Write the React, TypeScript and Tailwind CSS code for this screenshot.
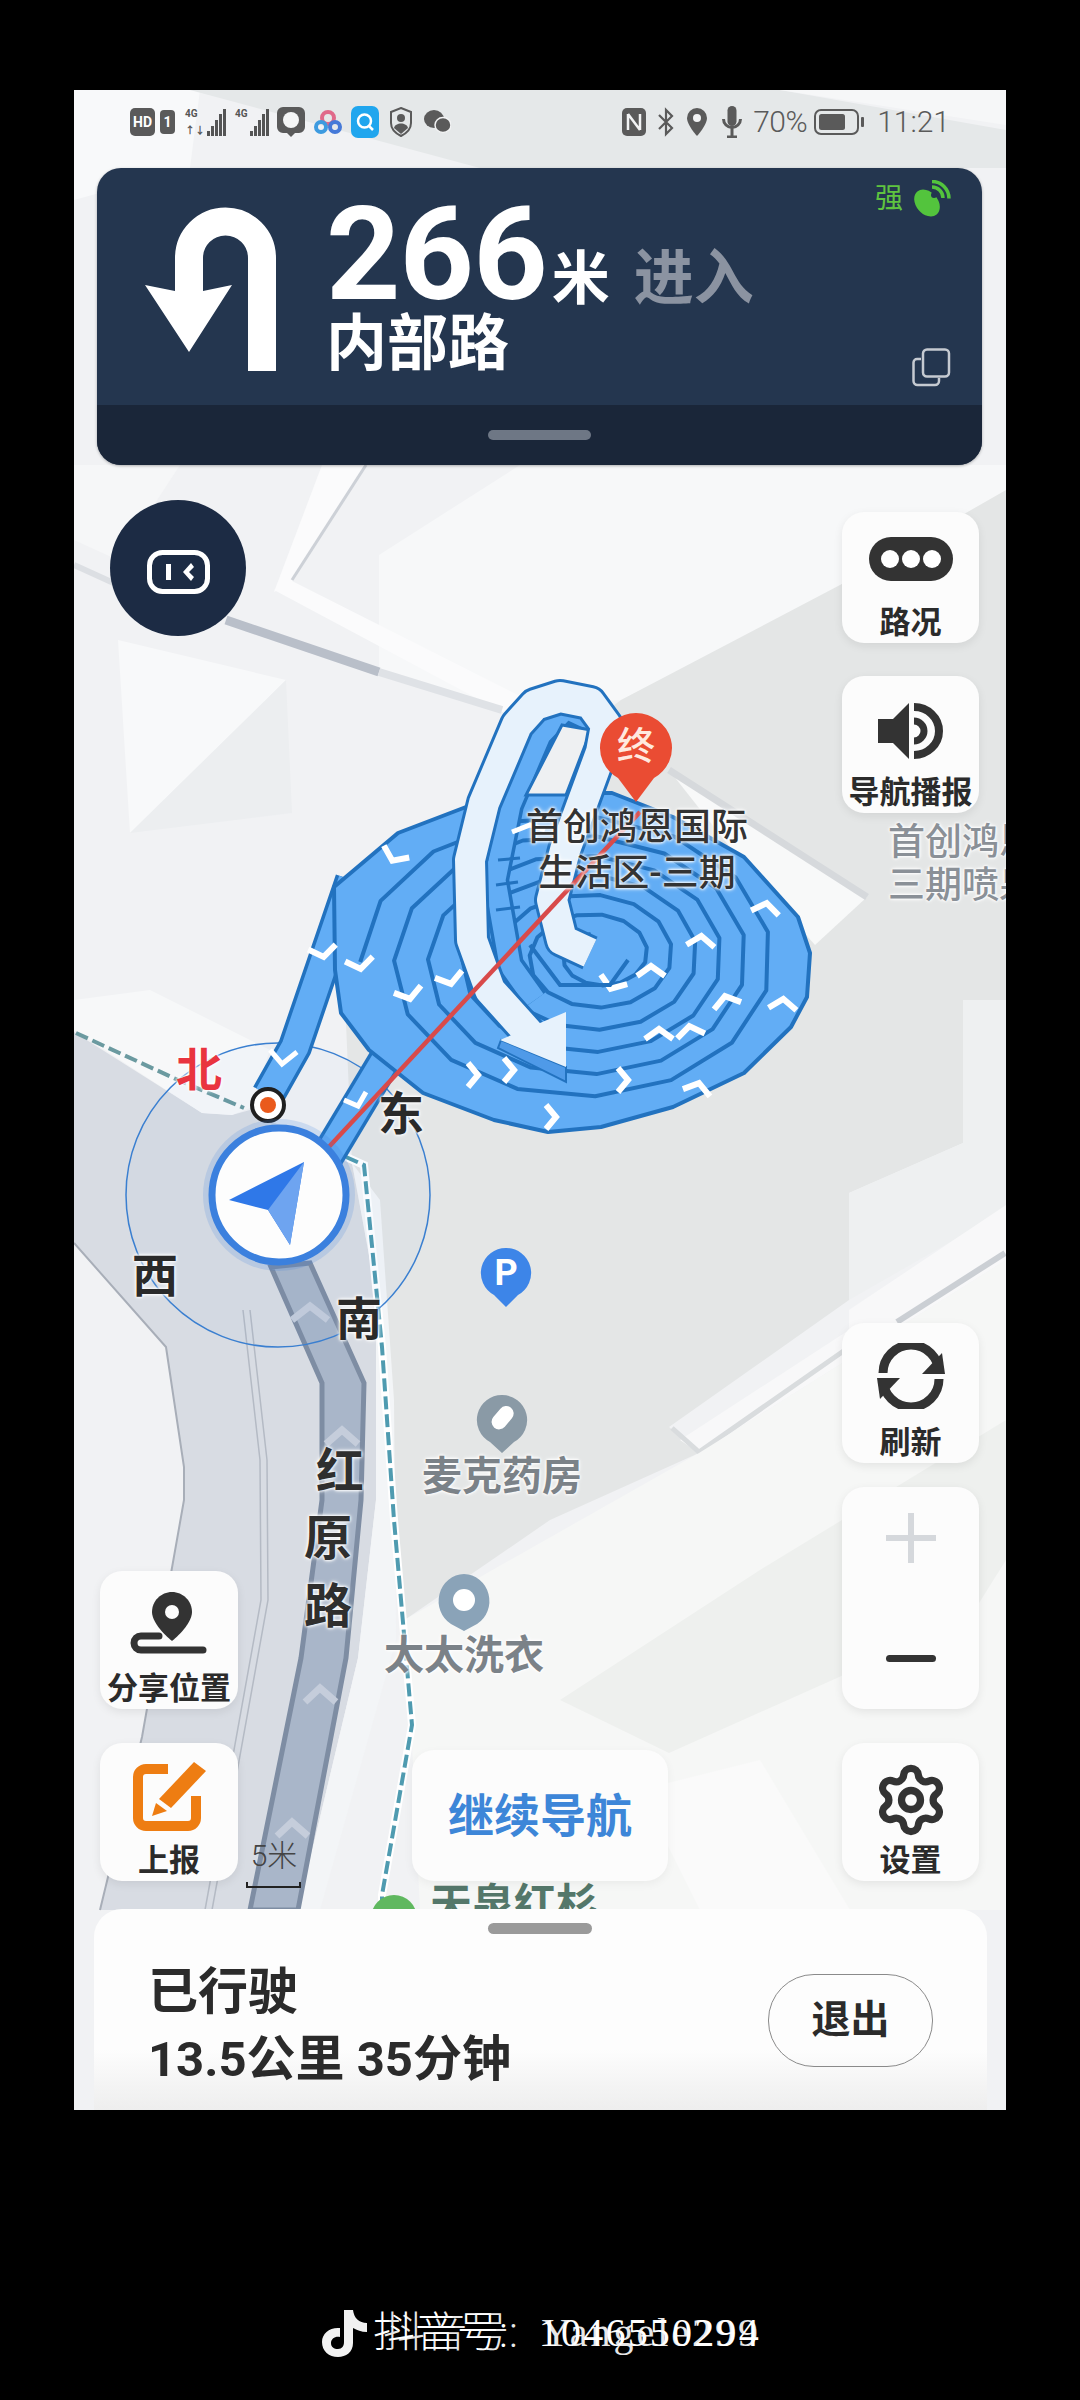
import React from "react";
import { Settings } from "lucide-react";

const TURNS = 6.2;
const kAt = (t: number) => 0.89 * (1 - t * 0.86);
const spiralPoint = (t: number) => {
  const a = Math.PI + t * TURNS * 2 * Math.PI;
  const k = kAt(t);
  const cx = 572 + t * 28;
  const cy = 962 - t * 8;
  return [cx + 238 * k * Math.cos(a), cy + 170 * k * Math.sin(a)];
};
const spiralLine = (() => {
  const pts: string[] = [];
  const n = Math.round((TURNS * 360) / 24);
  for (let i = 0; i <= n; i++) {
    const p = spiralPoint(i / n);
    pts.push(`${p[0].toFixed(1)},${p[1].toFixed(1)}`);
  }
  return pts.join(" ");
})();

const DOWN = "-14,-6 0,4 14,-6";
const UP = "-14,6 0,-4 14,6";
const RIGHT = "-5,-12 5,0 -5,12";
const chevrons: [number, number, string, number][] = [
  [394, 857, DOWN, 25],
  [323, 953, DOWN, -10],
  [360, 965, DOWN, -10],
  [409, 995, DOWN, -15],
  [450, 980, DOWN, -15],
  [766, 907, UP, 10],
  [701, 940, UP, 5],
  [651, 970, UP, 0],
  [783, 1003, UP, 5],
  [726, 1000, UP, -15],
  [659, 1033, UP, 0],
  [698, 1087, UP, 15],
  [551, 1117, RIGHT, 0],
  [509, 1070, RIGHT, 0],
  [473, 1075, RIGHT, 0],
  [623, 1080, RIGHT, 0],
  [612, 985, DOWN, 20],
  [690, 1030, UP, -10],
];

const DARK = "#2272bf";
const BLUE = "#62adf5";
const WHITE_PATH =
  "590,953 562,940 552,900 565,850 601,752 606,725 590,703 560,697 535,705 517,725 484,803 470,860 472,940 490,990 535,1040";
const INNER_PATH = "596,722 566,708 540,735 510,805 495,880 510,965 535,1000";

function MapDrawing() {
  return (
    <svg className="absolute inset-0" width="932" height="2020" viewBox="74 90 932 2020">
      <rect x="74" y="90" width="932" height="2020" fill="#f1f2f4" />
      {/* top strip */}
      <polygon points="74,90 200,90 190,168 74,200" fill="#f8f9fa" />
      <polygon points="190,90 780,90 1006,130 1006,168 480,168" fill="#e5e8e9" />
      <polygon points="780,90 1006,90 1006,125" fill="#f6f7f8" />
      {/* upper map */}
      <polygon points="379,555 520,465 1006,465 1006,560 840,590 621,700 502,707 379,670" fill="#f7f8f9" />
      <polygon points="118,640 286,680 130,833" fill="#f8f9fa" />
      <polygon points="286,680 292,813 130,833" fill="#eceef0" />
      <polygon points="74,465 180,465 118,560 74,540" fill="#f6f7f8" />
      {/* roads upper */}
      <polygon points="322,465 366,465 292,582 274,592" fill="#fbfbfc" />
      <polygon points="274,590 290,580 520,696 510,716" fill="#fbfbfc" />
      <line x1="366" y1="465" x2="292" y2="580" stroke="#cdd1d7" strokeWidth="3" />
      <line x1="226" y1="620" x2="379" y2="672" stroke="#b9bfc9" strokeWidth="9" />
      <line x1="379" y1="672" x2="502" y2="710" stroke="#dfe2e6" strokeWidth="8" />
      <line x1="74" y1="565" x2="118" y2="585" stroke="#dcdfe3" strokeWidth="6" />
      {/* gray building around and below spiral */}
      <polygon points="352,1163 345,1000 420,850 621,700 840,585 1006,490 1006,1000 963,1143 849,1193 849,1300 669,1427 699,1453 550,1520 406,1619 382,1350" fill="#e4e6e6" />
      <polygon points="669,770 867,897 815,945 740,860" fill="#f8f9f9" />
      <line x1="669" y1="770" x2="867" y2="897" stroke="#d6d9dc" strokeWidth="7" />
      <polygon points="963,1000 1006,1000 1006,1210 849,1300 849,1193 963,1143" fill="#eef0f1" />
      <polygon points="1006,1205 849,1310 849,1330 680,1440 699,1453 1006,1260" fill="#f8f8f9" />
      <line x1="1005" y1="1253" x2="897" y2="1322" stroke="#cbcfd4" strokeWidth="6" />
      <polyline points="672,1428 699,1452 845,1350" fill="none" stroke="#d9dcde" strokeWidth="5" />
      <polygon points="1006,1260 699,1453 406,1619 420,1910 1006,1910" fill="#f6f7f6" />
      <polygon points="669,1753 969,1619 1006,1560 1006,1420 760,1570 560,1700" fill="#eef0ee" />
      <polygon points="700,1910 850,1910 760,1760 640,1790" fill="#fafafa" />
      {/* left road */}
      <polygon points="74,1032 202,1113 232,1115 250,1110 352,1163 376,1293 376,1500 358,1658 298,1910 100,1910 142,1737 184,1500 184,1467 166,1347 74,1243" fill="#d8dce3" />
      <polygon points="74,1030 202,1113 232,1115 250,1108 270,1050 150,990 74,1000" fill="#f7f8f9" />
      <polygon points="352,1163 376,1293 376,1500 358,1658 298,1910 320,1910 396,1640 394,1400 380,1200" fill="#f3f5f7" />
      <polyline points="243,1310 260,1460 261,1600 225,1800 205,1910" fill="none" stroke="#b4bac4" strokeWidth="1.5" />
      <polyline points="250,1310 267,1460 268,1600 232,1800 212,1910" fill="none" stroke="#b4bac4" strokeWidth="1.5" />
      <polyline points="74,1243 166,1347 184,1467 184,1500 142,1737 100,1910" fill="none" stroke="#a8aeb8" strokeWidth="2" />
      {/* centre road */}
      <polygon points="271,1267 310,1263 364,1383 361,1500 346,1658 298,1910 250,1910 301,1658 322,1500 322,1383" fill="#a9b6c9" stroke="#7e8da3" strokeWidth="5" />
      <polyline points="292,1320 310,1306 328,1320" fill="none" stroke="#c5cddb" strokeWidth="7" />
      <polyline points="326,1444 342,1430 358,1444" fill="none" stroke="#c5cddb" strokeWidth="7" />
      <polyline points="305,1702 320,1688 336,1702" fill="none" stroke="#c5cddb" strokeWidth="7" />
      <polyline points="277,1836 292,1822 308,1836" fill="none" stroke="#c5cddb" strokeWidth="7" />
      {/* dashed line */}
      <polyline points="346,1157 364,1165 382,1347 394,1520 412,1725 382,1895 382,1905" fill="none" stroke="#ffffff" strokeWidth="8" />
      <polyline points="76,1033 178,1080 244,1108" fill="none" stroke="#6b9aa0" strokeWidth="4" strokeDasharray="13 5" />
      <polyline points="346,1157 364,1165 382,1347 394,1520 412,1725 382,1895 382,1905" fill="none" stroke="#4f9bb0" strokeWidth="4" strokeDasharray="13 5" />
      {/* compass ring */}
      <circle cx="278" cy="1195" r="152" fill="#3a80d8" fillOpacity="0.03" stroke="#3a7fd0" strokeWidth="1.5" />
      {/* approach strands */}
      <polyline points="268,1095 295,1047 352,880" fill="none" stroke={DARK} strokeWidth="34" strokeLinejoin="round" />
      <polyline points="268,1095 295,1047 352,880" fill="none" stroke={BLUE} strokeWidth="27" strokeLinejoin="round" />
      <polyline points="322,1165 388,1055" fill="none" stroke={DARK} strokeWidth="34" />
      <polyline points="322,1165 388,1055" fill="none" stroke={BLUE} strokeWidth="27" />
      <polyline points="270,1050 282,1064 297,1052" fill="none" stroke="#fff" strokeWidth="5" />
      <polyline points="344,1100 358,1106 366,1092" fill="none" stroke="#fff" strokeWidth="5" />
      {/* spiral */}
      <polygon
        points="334,887 398,833 466,807 530,793 612,793 673,817 744,857 798,917 810,953 807,997 791,1027 744,1073 673,1107 601,1127 548,1132 494,1120 423,1093 369,1050 341,1013 335,970"
        fill={BLUE}
        stroke={DARK}
        strokeWidth="4"
        strokeLinejoin="round"
      />
      <polyline points={spiralLine} fill="none" stroke={DARK} strokeWidth="4" strokeLinejoin="round" />
      {chevrons.map(([x, y, pts, r], i) => (
        <polyline key={i} points={pts} transform={`translate(${x} ${y}) rotate(${r})`} fill="none" stroke="#ffffff" strokeWidth="6" />
      ))}
      {/* inner strand and hole */}
      <polyline points={INNER_PATH} fill="none" stroke={DARK} strokeWidth="28" strokeLinejoin="round" />
      <polyline points={INNER_PATH} fill="none" stroke={BLUE} strokeWidth="21" strokeLinejoin="round" />
      <line x1="498" y1="860" x2="520" y2="858" stroke={DARK} strokeWidth="3" />
      <line x1="496" y1="885" x2="518" y2="882" stroke={DARK} strokeWidth="3" />
      <line x1="496" y1="910" x2="520" y2="907" stroke={DARK} strokeWidth="3" />
      <polyline points="512,832 530,825 545,830" fill="none" stroke="#fff" strokeWidth="5" />
      <polygon points="562,725 591,730 566,795 526,795" fill="#eef0f2" stroke={DARK} strokeWidth="3" />
      {/* white arrow route */}
      <polyline points={WHITE_PATH} fill="none" stroke={DARK} strokeWidth="36" strokeLinejoin="round" />
      <polyline points={WHITE_PATH} fill="none" stroke="#e7f2fc" strokeWidth="30" strokeLinejoin="round" />
      <polyline points="530,945 560,985 610,985 628,960" fill="none" stroke={DARK} strokeWidth="4" />
      <polygon points="501,1040 566,1067 566,1082 498,1048" fill="#4f9ae8" stroke={DARK} strokeWidth="2" />
      <polygon points="566,1012 500,1040 566,1067" fill="#e7f2fc" />
      {/* red line */}
      <line x1="326" y1="1150" x2="640" y2="812" stroke="#d84a4a" strokeWidth="4.5" />
      {/* origin dot */}
      <circle cx="268" cy="1105" r="16" fill="#fff" stroke="#1f1f1f" strokeWidth="4" />
      <circle cx="268" cy="1105" r="8" fill="#ea5a1c" />
      {/* car marker */}
      <circle cx="279" cy="1195" r="76" fill="#3b80e0" fillOpacity="0.18" />
      <circle cx="279" cy="1195" r="67" fill="#fdfdfd" stroke="#3b80de" strokeWidth="7" />
      <polygon points="304,1162 229,1200 268,1210 290,1245" fill="#2f78e8" />
      <polygon points="304,1162 268,1210 290,1245" fill="#6ea4f0" />
      {/* destination pin */}
      <path d="M636 713 a37 35 0 0 1 18 65 l-18 24 l-18 -24 a37 35 0 0 1 18 -65z" fill="#ea4c33" />
      {/* P pin */}
      <path d="M506 1248 a25 25 0 0 1 12 47 l-12 12 l-12 -12 a25 25 0 0 1 12 -47z" fill="#3d85e8" />
      {/* medicine pin */}
      <path d="M502 1395 a25 25 0 0 1 12 47 l-12 11 l-12 -11 a25 25 0 0 1 12 -47z" fill="#8a9aa6" />
      <rect x="490" y="1410" width="26" height="15" rx="7.5" transform="rotate(-50 503 1418)" fill="#fff" />
      {/* laundry pin */}
      <path d="M464 1574 a26 27 0 0 1 13 50 l-13 7 l-13 -7 a26 27 0 0 1 13 -50z" fill="#8aa3b8" />
      <circle cx="464" cy="1600" r="11" fill="#fff" />
      {/* green pin */}
      <circle cx="394" cy="1918" r="23" fill="#5fb85f" />
      {/* scale */}
      <path d="M247 1882 v5 H300 v-5" fill="none" stroke="#222" strokeWidth="2" />
    </svg>
  );
}

function UTurn() {
  return (
    <svg width="140" height="170" viewBox="140 205 140 170" className="ml-[45px] shrink-0">
      <path d="M260 371 V258 a36.5 36.5 0 0 0 -73 0 V294" fill="none" stroke="#fff" strokeWidth="28" />
      <polygon points="143,285 173,291 201,291 230,285 187,352" fill="#fff" />
    </svg>
  );
}

function Copy() {
  return (
    <svg width="39" height="39" viewBox="0 0 39 39" fill="none" stroke="#c5cad1" strokeWidth="2.5">
      <rect x="11" y="1.5" width="26" height="27" rx="4" />
      <path d="M9 11 H5 a3.5 3.5 0 0 0 -3.5 3.5 V33 a4 4 0 0 0 4 4 H23 a4 4 0 0 0 4 -4 V30" />
    </svg>
  );
}

function Satellite() {
  return (
    <svg width="39" height="38" viewBox="0 0 39 38" fill="none">
      <ellipse cx="15" cy="23" rx="11" ry="15" transform="rotate(-40 15 23)" fill="#53c43d" />
      <circle cx="22" cy="15" r="3" fill="#223550" />
      <path d="M20 7 a11 11 0 0 1 11 11 M20 1.5 a17 17 0 0 1 17 17" stroke="#53c43d" strokeWidth="3.5" />
    </svg>
  );
}

function Signal({ dual }: { dual?: boolean }) {
  return (
    <div className="flex items-end gap-[1px] h-[28px]">
      <div className="flex flex-col justify-between h-full text-[10px] leading-[11px] font-bold text-[#555] mr-[1px]">
        <span>4G</span>
        {dual ? <span>↑↓</span> : null}
      </div>
      <div className="w-[3px] h-[5px] bg-[#555]" />
      <div className="w-[3px] h-[10px] bg-[#555]" />
      <div className="w-[3px] h-[16px] bg-[#555]" />
      <div className="w-[3px] h-[22px] bg-[#555]" />
      <div className="w-[3px] h-[27px] bg-[#555]" />
    </div>
  );
}

function StatusBar() {
  return (
    <div className="relative h-[78px] shrink-0 flex items-center pl-[56px] pr-[56px] pb-[14px] text-[#5a5a5a]">
      <div className="flex items-center h-[28px] w-[25px] justify-center rounded-[5px] bg-[#5a5a5a] text-white text-[14px] font-bold">HD</div>
      <div className="flex items-center h-[24px] w-[15px] justify-center rounded-[4px] bg-[#5a5a5a] text-white text-[14px] font-bold ml-[5px]">1</div>
      <div className="ml-[10px]"><Signal dual /></div>
      <div className="ml-[9px]"><Signal /></div>
      <svg width="30" height="32" viewBox="0 0 30 32" className="ml-[7px]">
        <path d="M7 1 H23 a6 6 0 0 1 6 6 V21 a6 6 0 0 1 -6 6 H19 L15 31 L11 27 H7 a6 6 0 0 1 -6 -6 V7 a6 6 0 0 1 6 -6z" fill="#5a5a5a" />
        <circle cx="15" cy="14" r="8" fill="#f4f5f5" />
      </svg>
      <svg width="28" height="26" viewBox="0 0 28 26" className="ml-[8px]" fill="none" strokeWidth="4">
        <circle cx="14" cy="9" r="6" stroke="#e06a8a" />
        <circle cx="7" cy="18" r="5" stroke="#3d9be0" />
        <circle cx="21" cy="18" r="5" stroke="#4579d8" />
      </svg>
      <svg width="28" height="32" viewBox="0 0 28 32" className="ml-[9px]" fill="none">
        <rect width="28" height="32" rx="7" fill="#20a6ee" />
        <circle cx="13.5" cy="15" r="6.5" stroke="#fff" strokeWidth="2.5" />
        <path d="M18 20 L22 24" stroke="#fff" strokeWidth="2.5" />
      </svg>
      <svg width="22" height="30" viewBox="0 0 22 30" className="ml-[11px]">
        <path d="M11 1 L21 5 V16 C21 23 15 27 11 29 C7 27 1 23 1 16 V5z" fill="none" stroke="#5a5a5a" strokeWidth="2" />
        <circle cx="11" cy="11" r="4" fill="#5a5a5a" />
        <path d="M4 21 C5 15 17 15 18 21 L11 27z" fill="#5a5a5a" />
      </svg>
      <svg width="27" height="24" viewBox="0 0 27 24" className="ml-[12px]">
        <ellipse cx="10" cy="9" rx="10" ry="9" fill="#5a5a5a" />
        <ellipse cx="19" cy="15" rx="8" ry="7.5" fill="#5a5a5a" stroke="#f2f3f4" strokeWidth="1.5" />
      </svg>

      <svg width="26" height="30" viewBox="0 0 26 30" className="ml-auto">
        <rect x="1" y="1" width="24" height="28" rx="5" fill="#5a5a5a" />
        <path d="M7 7 V23 M19 7 V23 M7 7 L19 23" stroke="#f2f3f4" strokeWidth="2.5" fill="none" />
      </svg>
      <svg width="18" height="30" viewBox="0 0 18 30" className="ml-[10px]" fill="none" stroke="#5a5a5a" strokeWidth="2.2">
        <path d="M2 8 L15 21 L9 27 V3 L15 9 L2 22" />
      </svg>
      <svg width="20" height="30" viewBox="0 0 20 30" className="ml-[12px]">
        <path d="M10 1 a10 10 0 0 1 10 10 c0 7 -10 18 -10 18 s-10 -11 -10 -18 a10 10 0 0 1 10 -10z" fill="#5a5a5a" />
        <circle cx="10" cy="11" r="4" fill="#f2f3f4" />
      </svg>
      <svg width="20" height="32" viewBox="0 0 20 32" className="ml-[15px]" fill="none">
        <rect x="5.5" y="0" width="9" height="20" rx="4.5" fill="#5a5a5a" />
        <path d="M1.5 13 a8.5 8.5 0 0 0 17 0 M10 22 V31 M5 31 H15" stroke="#5a5a5a" strokeWidth="3" />
      </svg>
      <span className="ml-[11px] text-[30px] leading-none font-light tracking-[-0.5px]">70%</span>
      <svg width="51" height="26" viewBox="0 0 51 26" className="ml-[7px]" fill="none">
        <rect x="1" y="1" width="43" height="24" rx="6" stroke="#5a5a5a" strokeWidth="2" />
        <rect x="5" y="5" width="26" height="16" rx="2.5" fill="#5a5a5a" />
        <rect x="47" y="8" width="3" height="10" rx="1" fill="#5a5a5a" />
      </svg>
      <span className="ml-[12px] text-[30px] leading-none font-light">11:21</span>
    </div>
  );
}

function Header() {
  return (
    <div className="relative ml-[23px] mr-[24px] h-[297px] shrink-0 rounded-[24px] bg-[#24364f] overflow-hidden flex flex-col shadow-[0_1px_3px_rgba(0,0,0,0.3)]">
      <div className="flex-1 flex items-start pt-[37px]">
        <UTurn />
        <div className="ml-[44px] flex flex-col">
          <div className="flex items-baseline h-[100px]">
            <span className="text-[130px] leading-[100px] font-bold text-white tracking-[-1px]">266</span>
            <span className="ml-[5px] text-[58px] leading-none font-bold text-white">米</span>
            <span className="ml-[24px] text-[60px] leading-none font-bold text-[#8b93a1]">进入</span>
          </div>
          <span className="mt-[8px] text-[61px] leading-[62px] font-bold text-white">内部路</span>
        </div>
      </div>
      <div className="absolute right-[31px] top-[12px] flex items-center gap-[9px]">
        <span className="text-[28px] leading-none text-[#5fc43f]">强</span>
        <Satellite />
      </div>
      <div className="absolute right-[31px] top-[180px]">
        <Copy />
      </div>
      <div className="h-[60px] bg-[#1a2639] flex items-center justify-center">
        <div className="w-[103px] h-[10px] rounded-full bg-[#6e7785]" />
      </div>
    </div>
  );
}

function Tile({ label, children, className }: { label: string; children: React.ReactNode; className: string }) {
  return (
    <div className={`flex flex-col items-center rounded-[22px] bg-[#fcfcfc] shadow-[0_3px_10px_rgba(0,0,0,0.08)] ${className}`}>
      <div className="flex-1 flex items-center justify-center">{children}</div>
      <span className="text-[31px] leading-[38px] font-bold text-[#2b2b2b] whitespace-nowrap mb-[1px]">{label}</span>
    </div>
  );
}

function Controls() {
  return (
    <div className="relative flex flex-1 min-h-0 pl-[26px] pr-[27px]">
      <div className="flex flex-col w-[312px]">
        <div className="mt-[35px] ml-[10px] w-[136px] h-[136px] rounded-full bg-[#1c2b44] flex items-center justify-center">
          <svg width="63" height="44" viewBox="0 0 63 44" fill="none" className="mt-[8px]">
            <rect x="2.5" y="2.5" width="58" height="39" rx="13" stroke="#fff" strokeWidth="5" />
            <rect x="19" y="14" width="5" height="16" fill="#fff" />
            <polygon points="44,13 36,22 44,31 47,27 42,22 47,17" fill="#fff" />
          </svg>
        </div>
        <Tile label="分享位置" className="mt-auto w-[138px] h-[138px]">
          <svg width="80" height="65" viewBox="0 0 80 65" className="mt-[4px]">
            <path d="M43 2 c-11 0 -20 9 -20 20 c0 13 20 29 20 29 s20 -16 20 -29 c0 -11 -9 -20 -20 -20z" fill="#333" />
            <circle cx="43" cy="22" r="7" fill="#fcfcfc" />
            <path d="M30 46 H12 a7 7 0 0 0 0 14 H74" fill="none" stroke="#333" strokeWidth="7" strokeLinecap="round" />
          </svg>
        </Tile>
        <Tile label="上报" className="mt-[34px] mb-[28px] w-[138px] h-[138px]">
          <svg width="74" height="70" viewBox="0 0 74 70" fill="none" className="mt-[8px]">
            <path d="M36 7 H14 a8 8 0 0 0 -8 8 V56 a8 8 0 0 0 8 8 H56 a8 8 0 0 0 8 -8 V34" stroke="#ee7d12" strokeWidth="10" />
            <polygon points="62,0 74,9 39,46 27,37" fill="#ee7d12" />
            <polygon points="24,41 35,49 20,54" fill="#ee7d12" />
          </svg>
        </Tile>
      </div>
      <div className="self-end mb-[28px] w-[256px] h-[131px] rounded-[22px] bg-[#fcfcfc] flex items-center justify-center shadow-[0_3px_10px_rgba(0,0,0,0.05)]">
        <span className="text-[46px] leading-none font-bold text-[#3d86d8]">继续导航</span>
      </div>
      <div className="ml-auto flex flex-col w-[137px]">
        <Tile label="路况" className="mt-[47px] h-[131px]">
          <svg width="84" height="44" viewBox="0 0 84 44" className="mt-[2px]">
            <rect width="84" height="44" rx="22" fill="#333" />
            <circle cx="21" cy="22" r="9" fill="#fff" />
            <circle cx="42" cy="22" r="9" fill="#fff" />
            <circle cx="63" cy="22" r="9" fill="#fff" />
          </svg>
        </Tile>
        <Tile label="导航播报" className="mt-[33px] h-[137px]">
          <svg width="66" height="56" viewBox="0 0 66 56" fill="none" className="mt-[12px]">
            <polygon points="0,16 15,16 31,0 31,56 15,40 0,40" fill="#333" />
            <path d="M36 4 A25 24 0 0 1 36 52" stroke="#333" strokeWidth="8" />
            <path d="M36 18 A10 10 0 0 1 36 38" stroke="#333" strokeWidth="7" />
          </svg>
        </Tile>
        <Tile label="刷新" className="mt-[510px] h-[140px]">
          <svg width="70" height="66" viewBox="0 0 70 66" fill="none" className="mt-[4px]">
            <g>
              <path d="M7 30 A28 28 0 0 1 63 30" stroke="#333" strokeWidth="9" />
              <polygon points="46,31 69,31 66,10" fill="#333" />
            </g>
            <g transform="rotate(180 35 33)">
              <path d="M7 30 A28 28 0 0 1 63 30" stroke="#333" strokeWidth="9" />
              <polygon points="46,31 69,31 66,10" fill="#333" />
            </g>
          </svg>
        </Tile>
        <div className="mt-[24px] h-[222px] rounded-[22px] bg-[#fcfcfc] shadow-[0_3px_10px_rgba(0,0,0,0.08)] flex flex-col items-center">
          <svg width="50" height="50" viewBox="0 0 50 50" className="mt-[26px]">
            <path d="M25 0 V50 M0 25 H50" stroke="#d5d8dc" strokeWidth="6" />
          </svg>
          <div className="mt-[92px] w-[50px] h-[7px] rounded-full bg-[#333]" />
        </div>
        <Tile label="设置" className="mt-[34px] h-[138px]">
          <Settings size={76} strokeWidth={2.3} color="#333" className="mt-[14px]" />
        </Tile>
      </div>
    </div>
  );
}

function Sheet() {
  return (
    <div className="relative ml-[20px] mr-[19px] h-[201px] shrink-0 rounded-t-[28px] bg-gradient-to-b from-[#fdfdfd] from-70% to-[#eeeeee] flex items-center pl-[54px] pr-[54px]">
      <div className="absolute left-[394px] top-[14px] w-[104px] h-[11px] rounded-full bg-[#9a9a9a]" />
      <div className="flex flex-col mt-[32px] text-[#2b2b2b] font-bold">
        <span className="text-[50px] leading-[58px]">已行驶</span>
        <span className="mt-[11px] text-[49px] leading-[56px] whitespace-nowrap">13.5公里 35分钟</span>
      </div>
      <div className="ml-auto mt-[21px] w-[165px] h-[93px] rounded-[46px] border border-[#8a8a8a] flex items-center justify-center text-[39px] font-bold text-[#2b2b2b]">退出</div>
    </div>
  );
}

const halo = "[text-shadow:0_0_3px_#fff,0_0_3px_#fff,0_0_5px_#fff]";

function MapLabels() {
  const base = "absolute -translate-x-1/2 -translate-y-1/2 whitespace-nowrap leading-none";
  return (
    <>
      <span className={`${base} ${halo} left-[125px] top-[980px] text-[46px] font-bold text-[#e9343f]`}>北</span>
      <span className={`${base} ${halo} left-[327px] top-[1024px] text-[46px] font-bold text-[#2a2a2a]`}>东</span>
      <span className={`${base} ${halo} left-[81px] top-[1186px] text-[46px] font-bold text-[#2a2a2a]`}>西</span>
      <span className={`${base} ${halo} left-[285px] top-[1229px] text-[46px] font-bold text-[#2a2a2a]`}>南</span>
      <span className={`${base} ${halo} left-[266px] top-[1382px] text-[48px] font-bold text-[#2f2f2f]`}>红</span>
      <span className={`${base} ${halo} left-[254px] top-[1449px] text-[48px] font-bold text-[#2f2f2f]`}>原</span>
      <span className={`${base} ${halo} left-[254px] top-[1517px] text-[48px] font-bold text-[#2f2f2f]`}>路</span>
      <span className={`${base} left-[562px] top-[656px] text-[38px] font-medium text-[#ffe9df]`}>终</span>
      <span className={`${base} ${halo} left-[563px] top-[737px] text-[37px] font-medium text-[#333]`}>首创鸿恩国际</span>
      <span className={`${base} ${halo} left-[563px] top-[783px] text-[37px] font-medium text-[#333]`}>生活区-三期</span>
      <span className={`${base} left-[432px] top-[1183px] text-[36px] font-bold text-white`}>P</span>
      <span className={`${base} ${halo} left-[428px] top-[1387px] text-[40px] font-bold text-[#7b8288]`}>麦克药房</span>
      <span className={`${base} ${halo} left-[390px] top-[1566px] text-[40px] font-bold text-[#7b8288]`}>太太洗衣</span>
      <span className={`${base} left-[200px] top-[1766px] text-[30px] font-light text-[#444]`}>5米</span>
      <span className={`${base} left-[440px] top-[1815px] text-[42px] font-bold text-[#54776a]`}>天泉红杉</span>
      <span className={`${base} ${halo} !translate-x-0 left-[814px] top-[752px] text-[37px] font-medium text-[#8a9097]`}>首创鸿恩</span>
      <span className={`${base} ${halo} !translate-x-0 left-[814px] top-[795px] text-[37px] font-medium text-[#8a9097]`}>三期喷泉</span>
    </>
  );
}

function Watermark() {
  return (
    <div className="mt-[198px] ml-[320px] flex items-center h-[50px]">
      <svg width="48" height="50" viewBox="0 0 48 50">
        <path d="M24 2 H33 C34 10 39 15 47 15 V24 C41 24 37 22 33 20 V35 C33 44 26 49 18 49 C9 49 2 43 2 34 C2 25 10 19 20 20 V29 C15 28 11 31 11 35 C11 39 14 41 18 41 C22 41 24 38 24 34z" fill="#f2f2f2" />
      </svg>
      <div className="grid ml-[5px] text-white text-[42px] leading-none font-light">
        <div className="col-start-1 row-start-1 flex items-center whitespace-nowrap">
          <span>抖音号:</span>
          <span className="ml-[31px] font-['Liberation_Serif',serif] text-[40px] tracking-[2.2px]">1046550294</span>
        </div>
        <div className="col-start-1 row-start-1 flex items-center whitespace-nowrap opacity-90">
          <span className="ml-[10px]">抖音号:</span>
          <span className="ml-[24px] font-['Liberation_Serif',serif] text-[40px] tracking-[3px]">Yangele299</span>
        </div>
      </div>
    </div>
  );
}

export default function App() {
  return (
    <div className="w-[1080px] h-[2400px] bg-black pt-[90px] overflow-hidden font-['Roboto','Noto_Sans_CJK_SC',sans-serif]">
      <div className="relative ml-[74px] w-[932px] h-[2020px] overflow-hidden flex flex-col">
        <MapDrawing />
        <MapLabels />
        <StatusBar />
        <Header />
        <Controls />
        <Sheet />
      </div>
      <Watermark />
    </div>
  );
}
